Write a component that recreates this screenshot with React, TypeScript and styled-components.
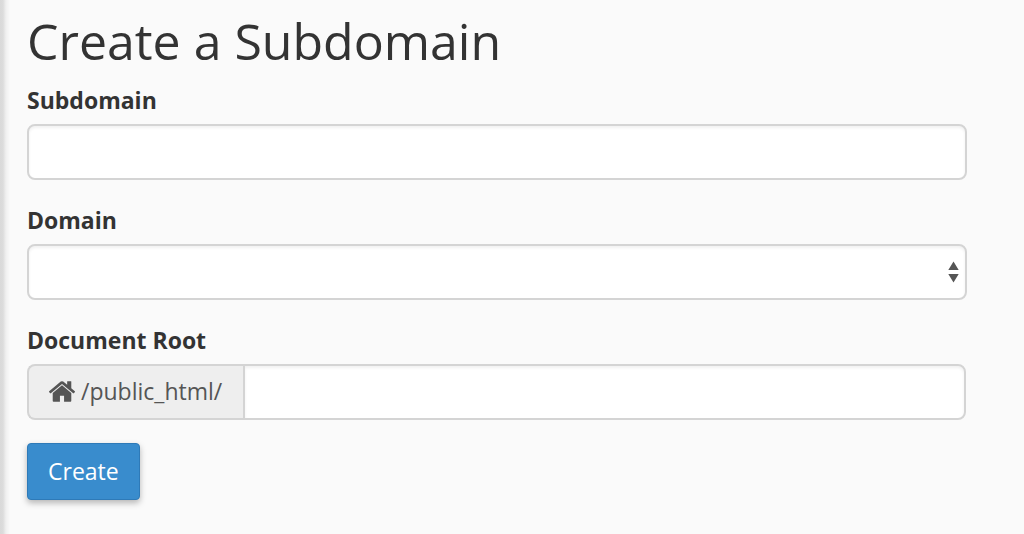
import React from "react";
import styled, { createGlobalStyle, css } from "styled-components";

const GlobalStyle = createGlobalStyle`
  *, *::before, *::after { box-sizing: border-box; }
  body {
    margin: 0;
    background: #fafafa;
    color: #333;
    font: 24px/34px "Open Sans", "Noto Sans", sans-serif;
  }
`;

const Page = styled.main`
  min-height: 100vh;
  padding: 14px 57px 32px 27px;
  background: linear-gradient(to right, #d9d9d9 0, #dcdcdc 3px, #f0f0f0 6px, #fafafa 10px);
`;

const Title = styled.h1`
  margin: 0 0 15px;
  font-size: 50px;
  font-weight: 400;
  line-height: 54px;
`;

const Field = styled.div`
  margin-bottom: 23px;
`;

const Label = styled.label`
  display: block;
  margin-bottom: 7px;
  font-size: 23px;
  font-weight: 700;
`;

const control = css`
  height: 56px;
  padding: 8px 20px;
  border: 2px solid #d4d4d4;
  border-radius: 8px;
  background: #fff;
  box-shadow: inset 0 2px 3px rgba(0, 0, 0, 0.06);
  color: #555;
  font: inherit;
`;

const TextInput = styled.input`
  ${control}
  display: block;
  width: 100%;
`;

const SelectBox = styled.div`
  position: relative;
`;

const Select = styled.select`
  ${control}
  display: block;
  width: 100%;
  appearance: none;
`;

const Arrows = styled.svg`
  position: absolute;
  top: 17px;
  right: 8px;
  pointer-events: none;
`;

const InputGroup = styled.div`
  display: flex;
  margin-right: 1px;
`;

const Addon = styled.span`
  display: flex;
  align-items: center;
  gap: 6px;
  height: 56px;
  padding: 0 21px 2px 20px;
  border: 2px solid #d4d4d4;
  border-right: 0;
  border-radius: 8px 0 0 8px;
  background: #eee;
  color: #555;
  font-size: 23px;
`;

const GroupInput = styled.input`
  ${control}
  flex: 1;
  min-width: 0;
  border-radius: 0 8px 8px 0;
`;

const SubmitButton = styled.button`
  display: block;
  height: 57px;
  padding: 0 20px 2px;
  border: 1px solid #2e7ab8;
  border-radius: 4px;
  background: #398ccd;
  box-shadow: 0 3px 6px rgba(0, 0, 0, 0.28);
  color: #fff;
  font: inherit;
  font-size: 23px;
`;

const HomeIcon = () => (
  <svg width="26" height="21" viewBox="90 253 1612 1283" fill="currentColor" aria-hidden="true">
    <path d="M1472 992v480q0 26-19 45t-45 19h-384v-384h-256v384h-384q-26 0-45-19t-19-45v-480q0-1 .5-3t.5-3l575-474 575 474q1 2 1 6zm223-69l-62 74q-8 9-21 11h-3q-13 0-21-7l-692-577-692 577q-12 8-24 7-13-2-21-11l-62-74q-8-10-7-23.5t11-21.5l719-599q32-26 76-26t76 26l244 204v-195q0-14 9-23t23-9h192q14 0 23 9t9 23v408l219 182q10 8 11 21.5t-7 23.5z" />
  </svg>
);

export default function App() {
  return (
    <>
      <GlobalStyle />
      <Page>
        <Title>Create a Subdomain</Title>
        <form onSubmit={(event) => event.preventDefault()}>
          <Field>
            <Label htmlFor="subdomain">Subdomain</Label>
            <TextInput id="subdomain" type="text" />
          </Field>
          <Field>
            <Label htmlFor="domain">Domain</Label>
            <SelectBox>
              <Select id="domain" />
              <Arrows width="11" height="22" viewBox="0 0 11 22" fill="#555" aria-hidden="true">
                <path d="M5.5 0.5L10.7 9H0.3ZM0.3 13H10.7L5.5 21.5Z" />
              </Arrows>
            </SelectBox>
          </Field>
          <Field>
            <Label htmlFor="root">Document Root</Label>
            <InputGroup>
              <Addon>
                <HomeIcon />
                /public_html/
              </Addon>
              <GroupInput id="root" type="text" />
            </InputGroup>
          </Field>
          <SubmitButton type="submit">Create</SubmitButton>
        </form>
      </Page>
    </>
  );
}
